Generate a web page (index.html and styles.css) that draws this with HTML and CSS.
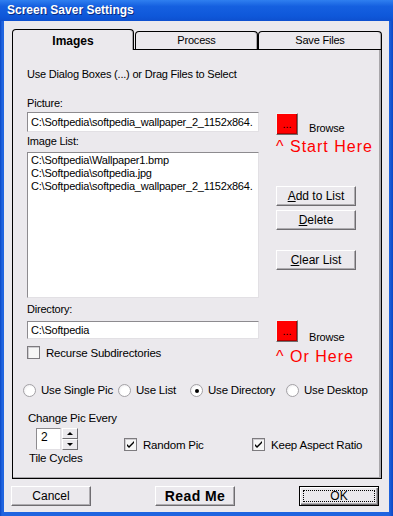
FILE: index.html
```html
<!DOCTYPE html>
<html>
	<head>
		<meta charset="utf-8">
		<meta name="viewport" content="width=device-width, initial-scale=1.0">
		<title>Screen Saver Settings</title>
		<link rel="stylesheet" href="styles.css">
	</head>
	<body>
		<div class="window">
			<div class="titlebar">Screen Saver Settings</div>
			<div class="client">
				<div class="tabs">
					<div class="tab active">Images</div>
					<div class="tab">Process</div>
					<div class="tab last">Save Files</div>
				</div>

				<div class="panel">
					<div class="hint">Use Dialog Boxes (...) or Drag Files to Select</div>

					<!-- 图片 + 列表 -->
					<div class="group">
						<div class="col-left">
							<div class="label">Picture:</div>
							<div class="field pic">C:\Softpedia\softpedia_wallpaper_2_1152x864.</div>
							<div class="label list-label">Image List:</div>
							<div class="listbox">
								<div>C:\Softpedia\Wallpaper1.bmp</div>
								<div>C:\Softpedia\softpedia.jpg</div>
								<div>C:\Softpedia\softpedia_wallpaper_2_1152x864.</div>
							</div>
						</div>
						<div class="col-right">
							<div class="browse-row first">
								<div class="red-btn">...</div>
								<span class="browse-label">Browse</span>
							</div>
							<div class="here">^ Start Here</div>
							<div class="btn add"><span><u>A</u>dd to List</span></div>
							<div class="btn del"><span><u>D</u>elete</span></div>
							<div class="btn clear"><span><u>C</u>lear List</span></div>
						</div>
					</div>

					<!-- 目录 -->
					<div class="group dirs">
						<div class="col-left">
							<div class="label">Directory:</div>
							<div class="field dir">C:\Softpedia</div>
							<div class="check-row recurse">
								<span class="checkbox"></span>
								<span>Recurse Subdirectories</span>
							</div>
						</div>
						<div class="col-right">
							<div class="browse-row second">
								<div class="red-btn">...</div>
								<span class="browse-label">Browse</span>
							</div>
							<div class="here or">^ Or Here</div>
						</div>
					</div>

					<div class="radios">
						<div class="radio-item"><span class="radio"></span>Use Single Pic</div>
						<div class="radio-item"><span class="radio"></span>Use List</div>
						<div class="radio-item"><span class="radio on"></span>Use Directory</div>
						<div class="radio-item"><span class="radio"></span>Use Desktop</div>
					</div>

					<div class="options">
						<div class="cycle">
							<div class="cycle-label">Change Pic Every</div>
							<div class="spin">
								<div class="spin-box">2</div>
								<div class="spin-btns">
									<div class="spin-btn"><span class="arrow up"></span></div>
									<div class="spin-btn"><span class="arrow down"></span></div>
								</div>
							</div>
							<div class="tile-label">Tile Cycles</div>
						</div>
						<div class="check-row random">
							<span class="checkbox checked">
								<svg width="11" height="11" viewBox="0 0 11 11"><path d="M2 5 L4 7 L9 2 L9 4 L4 9 L2 7 Z" fill="#000"/></svg>
							</span>
							<span>Random Pic</span>
						</div>
						<div class="check-row aspect">
							<span class="checkbox checked">
								<svg width="11" height="11" viewBox="0 0 11 11"><path d="M2 5 L4 7 L9 2 L9 4 L4 9 L2 7 Z" fill="#000"/></svg>
							</span>
							<span>Keep Aspect Ratio</span>
						</div>
					</div>
				</div>

				<div class="bottom-buttons">
					<div class="btn big">Cancel</div>
					<div class="btn big readme">Read Me</div>
					<div class="btn big ok"><span class="focus">OK</span></div>
				</div>
			</div>
		</div>
	</body>
</html>
```

FILE: styles.css
```css
* {
	padding: 0;
	margin: 0;
	box-sizing: border-box;
}

body {
	width: 393px;
	height: 516px;
	overflow: hidden;
	font-family: "Liberation Sans", Arial, sans-serif;
	font-size: 11px;
	letter-spacing: -0.2px;
	color: #000;
	background: #0b4fcf;
}

.window {
	height: 516px;
	display: flex;
	flex-direction: column;
	background: linear-gradient(to right, #0a47c4, #1f64e0 2px, #1f64e0 389px, #0a47c4);
}

.titlebar {
	height: 21px;
	padding-left: 7px;
	padding-top: 3px;
	font-size: 12px;
	font-weight: bold;
	letter-spacing: 0;
	color: #fff;
	text-shadow: 1px 1px 0 #0a2a80;
	background: linear-gradient(#2f7ff0, #1560e0 30%, #0f58da 75%, #0d50cf);
}

.client {
	flex: 1;
	margin: 0 4px 4px 4px;
	padding: 8px 0 0 8px;
	background: #ebe9ed;
}

/* 选项卡 */
.tabs {
	display: flex;
	align-items: flex-end;
	height: 20px;
	position: relative;
	z-index: 1;
}

.tab {
	height: 18px;
	width: 123px;
	border: 1px solid #000;
	border-bottom: none;
	border-radius: 4px 4px 0 0;
	box-shadow: inset -1px 0 0 #a9a7ab;
	text-align: center;
	line-height: 17px;
	font-size: 11px;
	background: #ebe9ed;
}

.tab.active {
	height: 21px;
	width: 122px;
	margin-right: 1px;
	margin-bottom: -1px;
	font-size: 12px;
	font-weight: bold;
	letter-spacing: 0;
	line-height: 22px;
}

.tab.last {
	width: 124px;
}

.panel {
	width: 370px;
	height: 430px;
	border: 1px solid #000;
	box-shadow: inset -2px -1px 0 #a9a7ab;
	padding: 18px 0 0 14px;
}

.hint,
.label {
	line-height: 13px;
	height: 13px;
}

.group {
	display: flex;
	margin-top: 16px;
}

.group.dirs {
	margin-top: 5px;
}

.col-left {
	width: 232px;
	display: flex;
	flex-direction: column;
}

.col-right {
	margin-left: 17px;
	display: flex;
	flex-direction: column;
}

.field {
	height: 20px;
	margin-top: 2px;
	padding-left: 3px;
	line-height: 18px;
	white-space: nowrap;
	overflow: hidden;
	background: #fff;
	border: 1px solid;
	border-color: #8d8b8f #e2e0e4 #e2e0e4 #8d8b8f;
}

.field.dir {
	height: 18px;
	margin-top: 5px;
	line-height: 16px;
}

.list-label {
	margin-top: 3px;
}

.listbox {
	height: 146px;
	margin-top: 4px;
	padding: 1px 0 0 3px;
	line-height: 13px;
	white-space: nowrap;
	overflow: hidden;
	background: #fff;
	border: 1px solid;
	border-color: #8d8b8f #e2e0e4 #e2e0e4 #8d8b8f;
}

/* 红色浏览按钮 */
.browse-row {
	display: flex;
	align-items: flex-start;
	margin-top: 16px;
}

.browse-row.second {
	margin-top: 17px;
}

.red-btn {
	width: 22px;
	height: 22px;
	padding-top: 5px;
	background: #ff0000;
	border: 1px solid;
	border-color: #f2f2f2 #6e6e6e #6e6e6e #f2f2f2;
	box-shadow: inset -1px -1px 0 #b00000;
	text-align: center;
	font-size: 11px;
	letter-spacing: 0;
	line-height: 11px;
	color: #000;
}

.browse-label {
	margin-left: 11px;
	margin-top: 9px;
	line-height: 13px;
}

.browse-row.second .browse-label {
	margin-top: 11px;
}

.here {
	margin-top: 3px;
	height: 18px;
	line-height: 18px;
	font-size: 16px;
	letter-spacing: 1px;
	color: #ff0000;
	white-space: nowrap;
}

.here.or {
	margin-top: 4px;
}

/* 普通按钮 */
.btn {
	width: 80px;
	height: 20px;
	display: flex;
	justify-content: center;
	align-items: center;
	background: #ebe9ed;
	border: 1px solid;
	border-color: #ffffff #6f6d71 #6f6d71 #ffffff;
	box-shadow: inset -1px -1px 0 #aeacb0;
	font-size: 12px;
	letter-spacing: 0;
}

.btn.add {
	margin-top: 30px;
}

.btn.del {
	margin-top: 4px;
}

.btn.clear {
	margin-top: 20px;
}

.btn u {
	text-decoration: underline;
}

/* 复选框 */
.check-row {
	display: flex;
	align-items: center;
	height: 13px;
}

.checkbox {
	width: 13px;
	height: 13px;
	margin-right: 6px;
	display: flex;
	justify-content: center;
	align-items: center;
	border: 1px solid #7d7b7f;
	box-shadow: inset 1px 1px 0 #cfcdd1;
	background: #f6f6f6;
}

.recurse {
	margin-top: 7px;
	font-size: 11.5px;
}

/* 单选按钮 */
.radios {
	display: grid;
	grid-template-columns: 95px 72px 96px auto;
	margin-top: 18px;
	margin-left: -4px;
	height: 13px;
	line-height: 13px;
	font-size: 11.5px;
}

.radio-item {
	display: flex;
	align-items: center;
	white-space: nowrap;
}

.radio {
	width: 13px;
	height: 13px;
	margin-right: 5px;
	border-radius: 50%;
	border: 1px solid #a4a2a6;
	background: radial-gradient(circle at 60% 60%, #ffffff 45%, #e4e2e6);
	display: flex;
	justify-content: center;
	align-items: center;
}

.radio.on::after {
	content: "";
	width: 4px;
	height: 4px;
	border-radius: 50%;
	background: #000;
}

/* 底部选项 */
.options {
	display: flex;
	margin-top: 15px;
	font-size: 11.5px;
}

.cycle {
	width: 97px;
	display: flex;
	flex-direction: column;
}

.cycle-label {
	margin-left: 1px;
	line-height: 13px;
	white-space: nowrap;
}

.spin {
	display: flex;
	margin-top: 3px;
	margin-left: 9px;
	height: 22px;
}

.spin-box {
	width: 25px;
	height: 22px;
	padding: 2px 0 0 4px;
	line-height: 13px;
	font-size: 12px;
	background: #fff;
	border: 1px solid;
	border-color: #8d8b8f #e2e0e4 #e2e0e4 #8d8b8f;
}

.spin-btns {
	display: flex;
	flex-direction: column;
	margin-left: 1px;
}

.spin-btn {
	width: 16px;
	height: 11px;
	display: flex;
	justify-content: center;
	align-items: center;
	background: #ebe9ed;
	border: 1px solid;
	border-color: #ffffff #6f6d71 #6f6d71 #ffffff;
}

.arrow {
	width: 0;
	height: 0;
	border-left: 3px solid transparent;
	border-right: 3px solid transparent;
}

.arrow.up {
	border-bottom: 3px solid #000;
}

.arrow.down {
	border-top: 3px solid #000;
}

.tile-label {
	margin-top: 2px;
	margin-left: 2px;
	line-height: 13px;
	white-space: nowrap;
}

.random {
	width: 128px;
	margin-top: 26px;
}

.aspect {
	margin-top: 26px;
}

/* 底部按钮 */
.bottom-buttons {
	display: flex;
	gap: 64px;
	margin-top: 7px;
	margin-left: -1px;
}

.btn.big {
	font-size: 12px;
}

.btn.readme {
	font-size: 14px;
	font-weight: bold;
	letter-spacing: 0.4px;
}

.btn.ok {
	border: 1px solid #000;
	box-shadow: inset 1px 1px 0 #fff, inset -1px -1px 0 #6f6d71, inset -2px -2px 0 #aeacb0;
	padding: 3px;
}

.focus {
	width: 100%;
	height: 100%;
	display: flex;
	justify-content: center;
	align-items: center;
	border: 1px dotted #000;
}
```
